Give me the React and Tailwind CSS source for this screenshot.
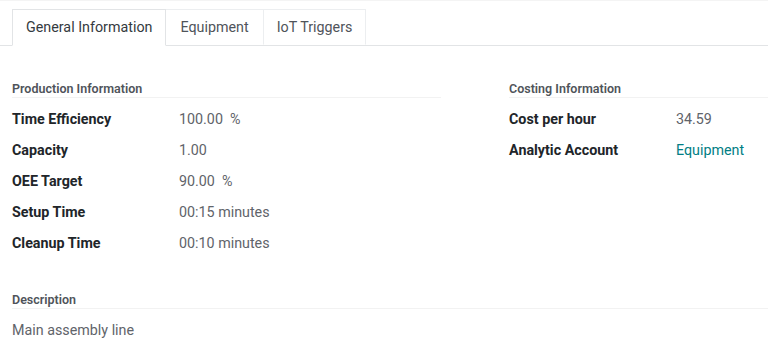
export default function App() {
  const left = [
    ["Time Efficiency", "100.00  %"],
    ["Capacity", "1.00"],
    ["OEE Target", "90.00  %"],
    ["Setup Time", "00:15 minutes"],
    ["Cleanup Time", "00:10 minutes"],
  ];
  const right = [
    ["Cost per hour", "34.59", false],
    ["Analytic Account", "Equipment", true],
  ];
  const Row = ({ label, value, link }) => (
    <div className="flex h-[31px] items-center">
      <div className="w-[167px] shrink-0 text-[14.3px] font-bold text-[#212529]">{label}</div>
      <div className={"whitespace-pre text-[14.3px] " + (link ? "text-[#017e84]" : "text-[#5f646a]")}>{value}</div>
    </div>
  );
  const Heading = ({ children }) => (
    <div className="border-b border-[#f2f2f2] pt-[2px] text-[12.5px] font-semibold leading-[16px] text-[#4f545a]">
      {children}
    </div>
  );
  return (
    <div
      className="h-[358px] w-[768px] overflow-hidden border-t border-[#f4f4f4] bg-white"
      style={{ fontFamily: "Roboto, 'Liberation Sans', sans-serif" }}
    >
      <div className="flex border-b border-[#e2e4e6] px-3 pt-[8px]">
        <div className="-mb-px flex h-[37px] items-center border border-b-white border-[#e2e4e6] bg-white px-[13px] pt-[1px] text-[14.3px] text-[#343a40]">
          General Information
        </div>
        <div className="flex h-[36px] items-center border-y border-r border-t-[#eceef0] border-r-[#eceef0] border-b-transparent px-[14px] pt-[1px] text-[14.3px] text-[#4f545a]">
          Equipment
        </div>
        <div className="flex h-[36px] items-center border-y border-r border-t-[#eceef0] border-r-[#eceef0] border-b-transparent px-[13px] pt-[1px] text-[14.3px] text-[#4f545a]">
          IoT Triggers
        </div>
      </div>
      <div className="pl-3 pt-[33px]">
        <div className="grid grid-cols-[429px_1fr] gap-x-[68px]">
          <div>
            <Heading>Production Information</Heading>
            <div className="mt-[6px]">
              {left.map(([l, v]) => (
                <Row key={l} label={l} value={v} />
              ))}
            </div>
          </div>
          <div>
            <Heading>Costing Information</Heading>
            <div className="mt-[6px]">
              {right.map(([l, v, link]) => (
                <Row key={l} label={l} value={v} link={link} />
              ))}
            </div>
          </div>
        </div>
        <div className="mt-[31px]">
          <Heading>Description</Heading>
          <div className="mt-[11px] text-[14.3px] text-[#5f646a]">Main assembly line</div>
        </div>
      </div>
    </div>
  );
}
